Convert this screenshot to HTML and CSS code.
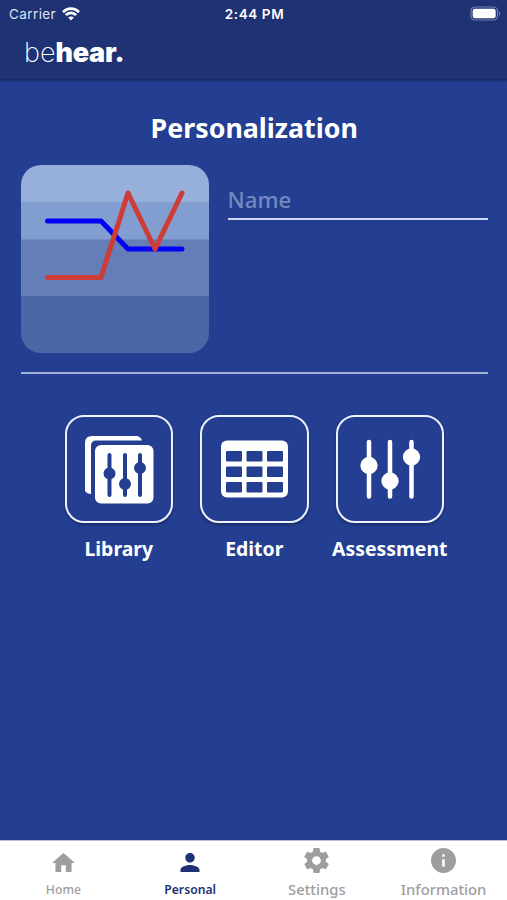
FILE: index.html
```html
<!DOCTYPE html>
<html lang="en">

<head>
    <meta charset="UTF-8">
    <meta name="viewport" content="width=device-width, initial-scale=1.0">
    <title>Personalization</title>
    <link rel="stylesheet" href="styles.css">
</head>

<body>
    <header class="app-header">
        <div class="status-bar">
            <div class="carrier">
                <span>Carrier</span>
                <svg class="wifi" width="18" height="14" viewBox="0 0 18 14" fill="none" stroke="#fff" stroke-width="2.8">
                    <path d="M1 5.2C5.5.3 12.5.3 17 5.2M3.9 8.1C6.7 5 11.3 5 14.1 8.1" />
                    <path d="M9 13.5L6.2 10.6C7.7 9 10.3 9 11.8 10.6Z" fill="#fff" stroke="none" />
                </svg>
            </div>
            <span class="clock">2:44 PM</span>
            <svg class="battery" width="31" height="15" viewBox="0 0 31 15">
                <rect x="1" y="1" width="26.5" height="13" rx="4" fill="none" stroke="#7582ae" stroke-width="1.2" />
                <rect x="2.7" y="2.7" width="23" height="9.6" rx="2.2" fill="#fff" />
                <path d="M29 5.2C30.8 6 30.8 9 29 9.8Z" fill="#7582ae" />
            </svg>
        </div>
        <div class="logo"><span class="logo-thin">be</span><span class="logo-bold">hear.</span></div>
    </header>

    <main>
        <h1>Personalization</h1>

        <section class="profile">
            <svg class="chart" width="188" height="188" viewBox="0.5 0.5 188 188">
                <rect width="189" height="38" fill="#96afdb" />
                <rect y="37.5" width="189" height="38" fill="#829dd0" />
                <rect y="75" width="189" height="57" fill="#657eb7" />
                <rect y="131.5" width="189" height="57" fill="#4d67a6" />
                <g fill="none" stroke-width="5" stroke-linecap="round" stroke-linejoin="round">
                    <path d="M27 56.5H80.5L107.5 84.5H161.5" stroke="#0000f5" />
                    <path d="M27 113H80.5L107.5 28.5L134.500 84.5L161.5 28.5" stroke="#cd3c36" />
                </g>
            </svg>
            <input class="name-input" type="text" placeholder="Name">
        </section>

        <!-- Main actions -->
        <nav class="actions">
            <a class="action">
                <span class="action-box">
                    <svg width="108" height="108" viewBox="0 0 108 108">
                        <path d="M20 78V28Q20 21 27 21H71Q75.5 21 77 25.5H31Q26 25.5 26 31V79Q22 79 20 76Z" fill="#fff" />
                        <rect x="30" y="30" width="58.5" height="58.5" rx="6" fill="#fff" />
                        <g fill="#243f91" stroke="#243f91" stroke-width="4" stroke-linecap="round">
                            <path d="M44.5 40V80M60 40V80M75 40V80" />
                            <circle cx="44.5" cy="58.5" r="4" />
                            <circle cx="60" cy="69" r="4" />
                            <circle cx="75" cy="53" r="4" />
                        </g>
                    </svg>
                </span>
                <span class="action-label">Library</span>
            </a>
            <a class="action">
                <span class="action-box">
                    <svg width="108" height="108" viewBox="0 0 108 108">
                        <rect x="21" y="25.5" width="67" height="57" rx="6" fill="#fff" />
                        <g fill="#243f91">
                            <rect x="26" y="36" width="16" height="10.5" rx="1" />
                            <rect x="46.5" y="36" width="16" height="10.5" rx="1" />
                            <rect x="67" y="36" width="16" height="10.5" rx="1" />
                            <rect x="26" y="51.5" width="16" height="10.5" rx="1" />
                            <rect x="46.5" y="51.5" width="16" height="10.5" rx="1" />
                            <rect x="67" y="51.5" width="16" height="10.5" rx="1" />
                            <rect x="26" y="67" width="16" height="10.5" rx="1" />
                            <rect x="46.5" y="67" width="16" height="10.5" rx="1" />
                            <rect x="67" y="67" width="16" height="10.5" rx="1" />
                        </g>
                    </svg>
                </span>
                <span class="action-label">Editor</span>
            </a>
            <a class="action">
                <span class="action-box">
                    <svg width="108" height="108" viewBox="0 0 108 108">
                        <g fill="#fff" stroke="#fff" stroke-width="4.5" stroke-linecap="round">
                            <path d="M33 27V81.5M54 27V81.5M75.5 27V81.5" />
                            <circle cx="33" cy="50.5" r="6.4" />
                            <circle cx="54" cy="66" r="6.4" />
                            <circle cx="75.5" cy="42" r="6.4" />
                        </g>
                    </svg>
                </span>
                <span class="action-label">Assessment</span>
            </a>
        </nav>
    </main>

    <!-- Bottom tabs -->
    <footer class="tab-bar">
        <a class="tab tab-small">
            <svg width="23" height="21" viewBox="2 3 20 17" preserveAspectRatio="none">
                <path d="M10 20v-6h4v6h5v-8h3L12 3 2 12h3v8z" />
            </svg>
            <span>Home</span>
        </a>
        <a class="tab tab-small active">
            <svg width="20" height="21" viewBox="4 4 16 16">
                <path d="M12 12c2.21 0 4-1.79 4-4s-1.79-4-4-4-4 1.79-4 4 1.79 4 4 4zm0 2c-2.67 0-8 1.34-8 4v2h16v-2c0-2.66-5.33-4-8-4z" />
            </svg>
            <span>Personal</span>
        </a>
        <a class="tab">
            <svg width="25" height="25" viewBox="2 2 20 20">
                <path d="M19.43 12.98c.04-.32.07-.64.07-.98s-.03-.66-.07-.98l2.11-1.65c.19-.15.24-.42.12-.64l-2-3.46c-.12-.22-.39-.3-.61-.22l-2.49 1c-.52-.4-1.08-.73-1.69-.98l-.38-2.65C14.46 2.18 14.25 2 14 2h-4c-.25 0-.46.18-.49.42l-.38 2.65c-.61.25-1.17.59-1.69.98l-2.49-1c-.23-.09-.49 0-.61.22l-2 3.46c-.13.22-.07.49.12.64l2.11 1.65c-.04.32-.07.65-.07.98s.03.66.07.98l-2.11 1.65c-.19.15-.24.42-.12.64l2 3.46c.12.22.39.3.61.22l2.49-1c.52.4 1.08.73 1.69.98l.38 2.65c.03.24.24.42.49.42h4c.25 0 .46-.18.49-.42l.38-2.65c.61-.25 1.17-.59 1.69-.98l2.49 1c.23.09.49 0 .61-.22l2-3.46c.12-.22.07-.49-.12-.64l-2.11-1.65zM12 15.5c-1.93 0-3.5-1.57-3.5-3.5s1.57-3.5 3.5-3.5 3.5 1.57 3.5 3.5-1.57 3.5-3.5 3.5z" />
            </svg>
            <span>Settings</span>
        </a>
        <a class="tab">
            <svg width="25" height="25" viewBox="2 2 20 20">
                <path d="M12 2C6.48 2 2 6.48 2 12s4.48 10 10 10 10-4.48 10-10S17.52 2 12 2zm1 15h-2v-6h2v6zm0-8h-2V7h2v2z" />
            </svg>
            <span>Information</span>
        </a>
    </footer>
</body>

</html>
```
FILE: styles.css
```css
* {
    box-sizing: border-box;
}

body {
    margin: 0;
    height: 900px;
    display: flex;
    flex-direction: column;
    background-color: #243f91;
    color: #fff;
    font-family: "Noto Sans", "Open Sans", sans-serif;
    overflow: hidden;
}

.app-header {
    height: 80px;
    background-color: #1e3274;
    border-bottom: 1px solid #1b2b62;
    box-shadow: 0 1px 2px rgba(0, 0, 0, 0.3);
}

.status-bar {
    display: grid;
    grid-template-columns: 1fr auto 1fr;
    align-items: center;
    height: 27px;
    padding: 0 6px 0 9px;
    font-family: Inter, sans-serif;
    font-size: 13.5px;
}

.carrier {
    display: flex;
    align-items: center;
    gap: 6px;
    color: #dfe3f0;
    letter-spacing: 0.4px;
}

.clock {
    margin-right: 1px;
    font-weight: 600;
    letter-spacing: 0.6px;
}

.battery {
    justify-self: end;
}

.logo {
    padding: 9px 0 0 24px;
    font-family: Inter, sans-serif;
    font-size: 27px;
    line-height: 34px;
}

.logo-thin {
    font-weight: 200;
    letter-spacing: 0;
}

.logo-bold {
    font-weight: 900;
    letter-spacing: -0.3px;
}

main {
    flex: 1;
    padding: 0 19px 0 20.5px;
}

h1 {
    margin: 29px 0 0;
    text-align: center;
    font-size: 26.8px;
    font-weight: 700;
    line-height: 37px;
}

.profile {
    display: flex;
    align-items: flex-start;
    gap: 19px;
    height: 228px;
    padding-top: 19px;
    border-bottom: 2px solid #a4b1d6;
}

.chart {
    flex: none;
    border-radius: 20px;
}

.name-input {
    flex: 1;
    min-width: 0;
    height: 36px;
    margin-top: 19px;
    padding: 0 0 4px;
    border: none;
    border-bottom: 2px solid #d0d8ef;
    border-radius: 0;
    background: none;
    color: #fff;
    font-family: inherit;
    font-size: 22.2px;
    font-weight: 500;
    outline: none;
}

.name-input::placeholder {
    color: #7489c0;
}

.actions {
    display: flex;
    justify-content: center;
    gap: 27px;
    margin-top: 41px;
}

.action {
    display: flex;
    flex-direction: column;
    align-items: center;
    width: 108.5px;
}

.action-box {
    display: flex;
    align-items: center;
    justify-content: center;
    width: 108.5px;
    height: 108px;
    border: 2px solid #eef2fc;
    border-radius: 19px;
    box-shadow: 0 2px 3px rgba(0, 0, 0, 0.3);
}

.action-box svg {
    flex: none;
}

.action-label {
    margin-top: 12px;
    font-size: 19.4px;
    font-weight: 700;
    line-height: 28px;
    white-space: nowrap;
}

.tab-bar {
    display: flex;
    height: 60px;
    background-color: #fff;
    border-top: 1px solid #b4bddb;
}

.tab {
    flex: 1;
    display: flex;
    flex-direction: column;
    align-items: center;
    padding-top: 7px;
    color: #9e9e9e;
    font-size: 14.8px;
    font-weight: 500;
    line-height: 20px;
}

.tab svg {
    fill: currentColor;
}

.tab span {
    margin-top: 6px;
}

.tab-small {
    padding-top: 12px;
    font-size: 12.2px;
}

.tab-small span {
    margin-top: 8px;
}

.tab.active {
    color: #1e3274;
    font-weight: 600;
}
```
